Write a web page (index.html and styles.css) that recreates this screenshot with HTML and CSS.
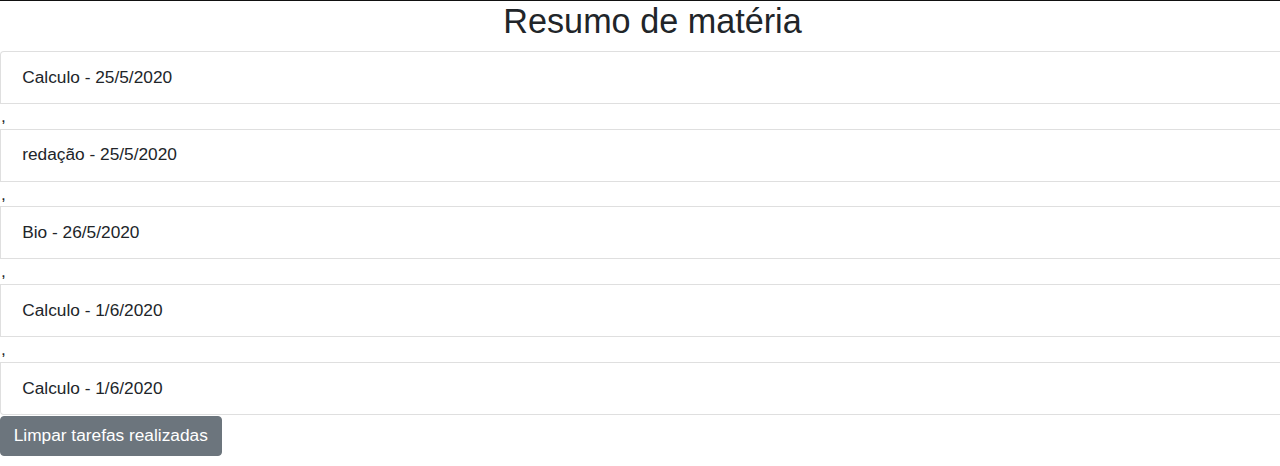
FILE: index.html
```html
<!DOCTYPE html>
<html lang="pt">
<head>
<meta charset="utf-8">
<title>Resumo de matéria</title>
<link rel="stylesheet" href="styles.css">
</head>
<body>
<div class="page">
  <h2 class="title">Resumo de matéria</h2>
  <ul class="list-group">
    <li class="list-group-item first">Calculo - 25/5/2020</li>
    <li class="sep">,</li>
    <li class="list-group-item">redação - 25/5/2020</li>
    <li class="sep">,</li>
    <li class="list-group-item">Bio - 26/5/2020</li>
    <li class="sep">,</li>
    <li class="list-group-item">Calculo - 1/6/2020</li>
    <li class="sep">,</li>
    <li class="list-group-item last">Calculo - 1/6/2020</li>
  </ul>
  <button class="btn" type="button">Limpar tarefas realizadas</button>
</div>
</body>
</html>
```

FILE: styles.css
```css
html, body {
  margin: 0;
  padding: 0;
  background: #fff;
}

body {
  border-top: 1px solid #111;
  overflow: hidden;
  font-family: "Liberation Sans", Arial, sans-serif;
  font-size: 17.3px;
  color: #212529;
}

.page {
  width: 1305px;
  display: flex;
  flex-direction: column;
  align-items: stretch;
}

.title {
  margin: 0 0 9px 0;
  font-size: 34.2px;
  font-weight: 500;
  line-height: 40.8px;
  text-align: center;
  color: #212529;
}

.list-group {
  list-style: none;
  margin: 0;
  padding: 0;
  display: flex;
  flex-direction: column;
}

.list-group-item {
  padding: 12.75px 21.25px;
  line-height: 25.5px;
  border: 1px solid rgba(0, 0, 0, 0.125);
  background: #fff;
}

.list-group-item.first {
  border-top-left-radius: 4px;
  border-top-right-radius: 4px;
}

.list-group-item.last {
  border-bottom-left-radius: 4px;
  border-bottom-right-radius: 4px;
}

.sep {
  line-height: 24.75px;
  padding-left: 1px;
}

.btn {
  align-self: flex-start;
  margin-top: 1px;
  padding: 6.5px 12.75px;
  font-family: "Liberation Sans", Arial, sans-serif;
  font-size: 17.3px;
  line-height: 25.5px;
  color: #fff;
  background: #6c757d;
  border: 1px solid #6c757d;
  border-radius: 4px;
  cursor: pointer;
}
```
